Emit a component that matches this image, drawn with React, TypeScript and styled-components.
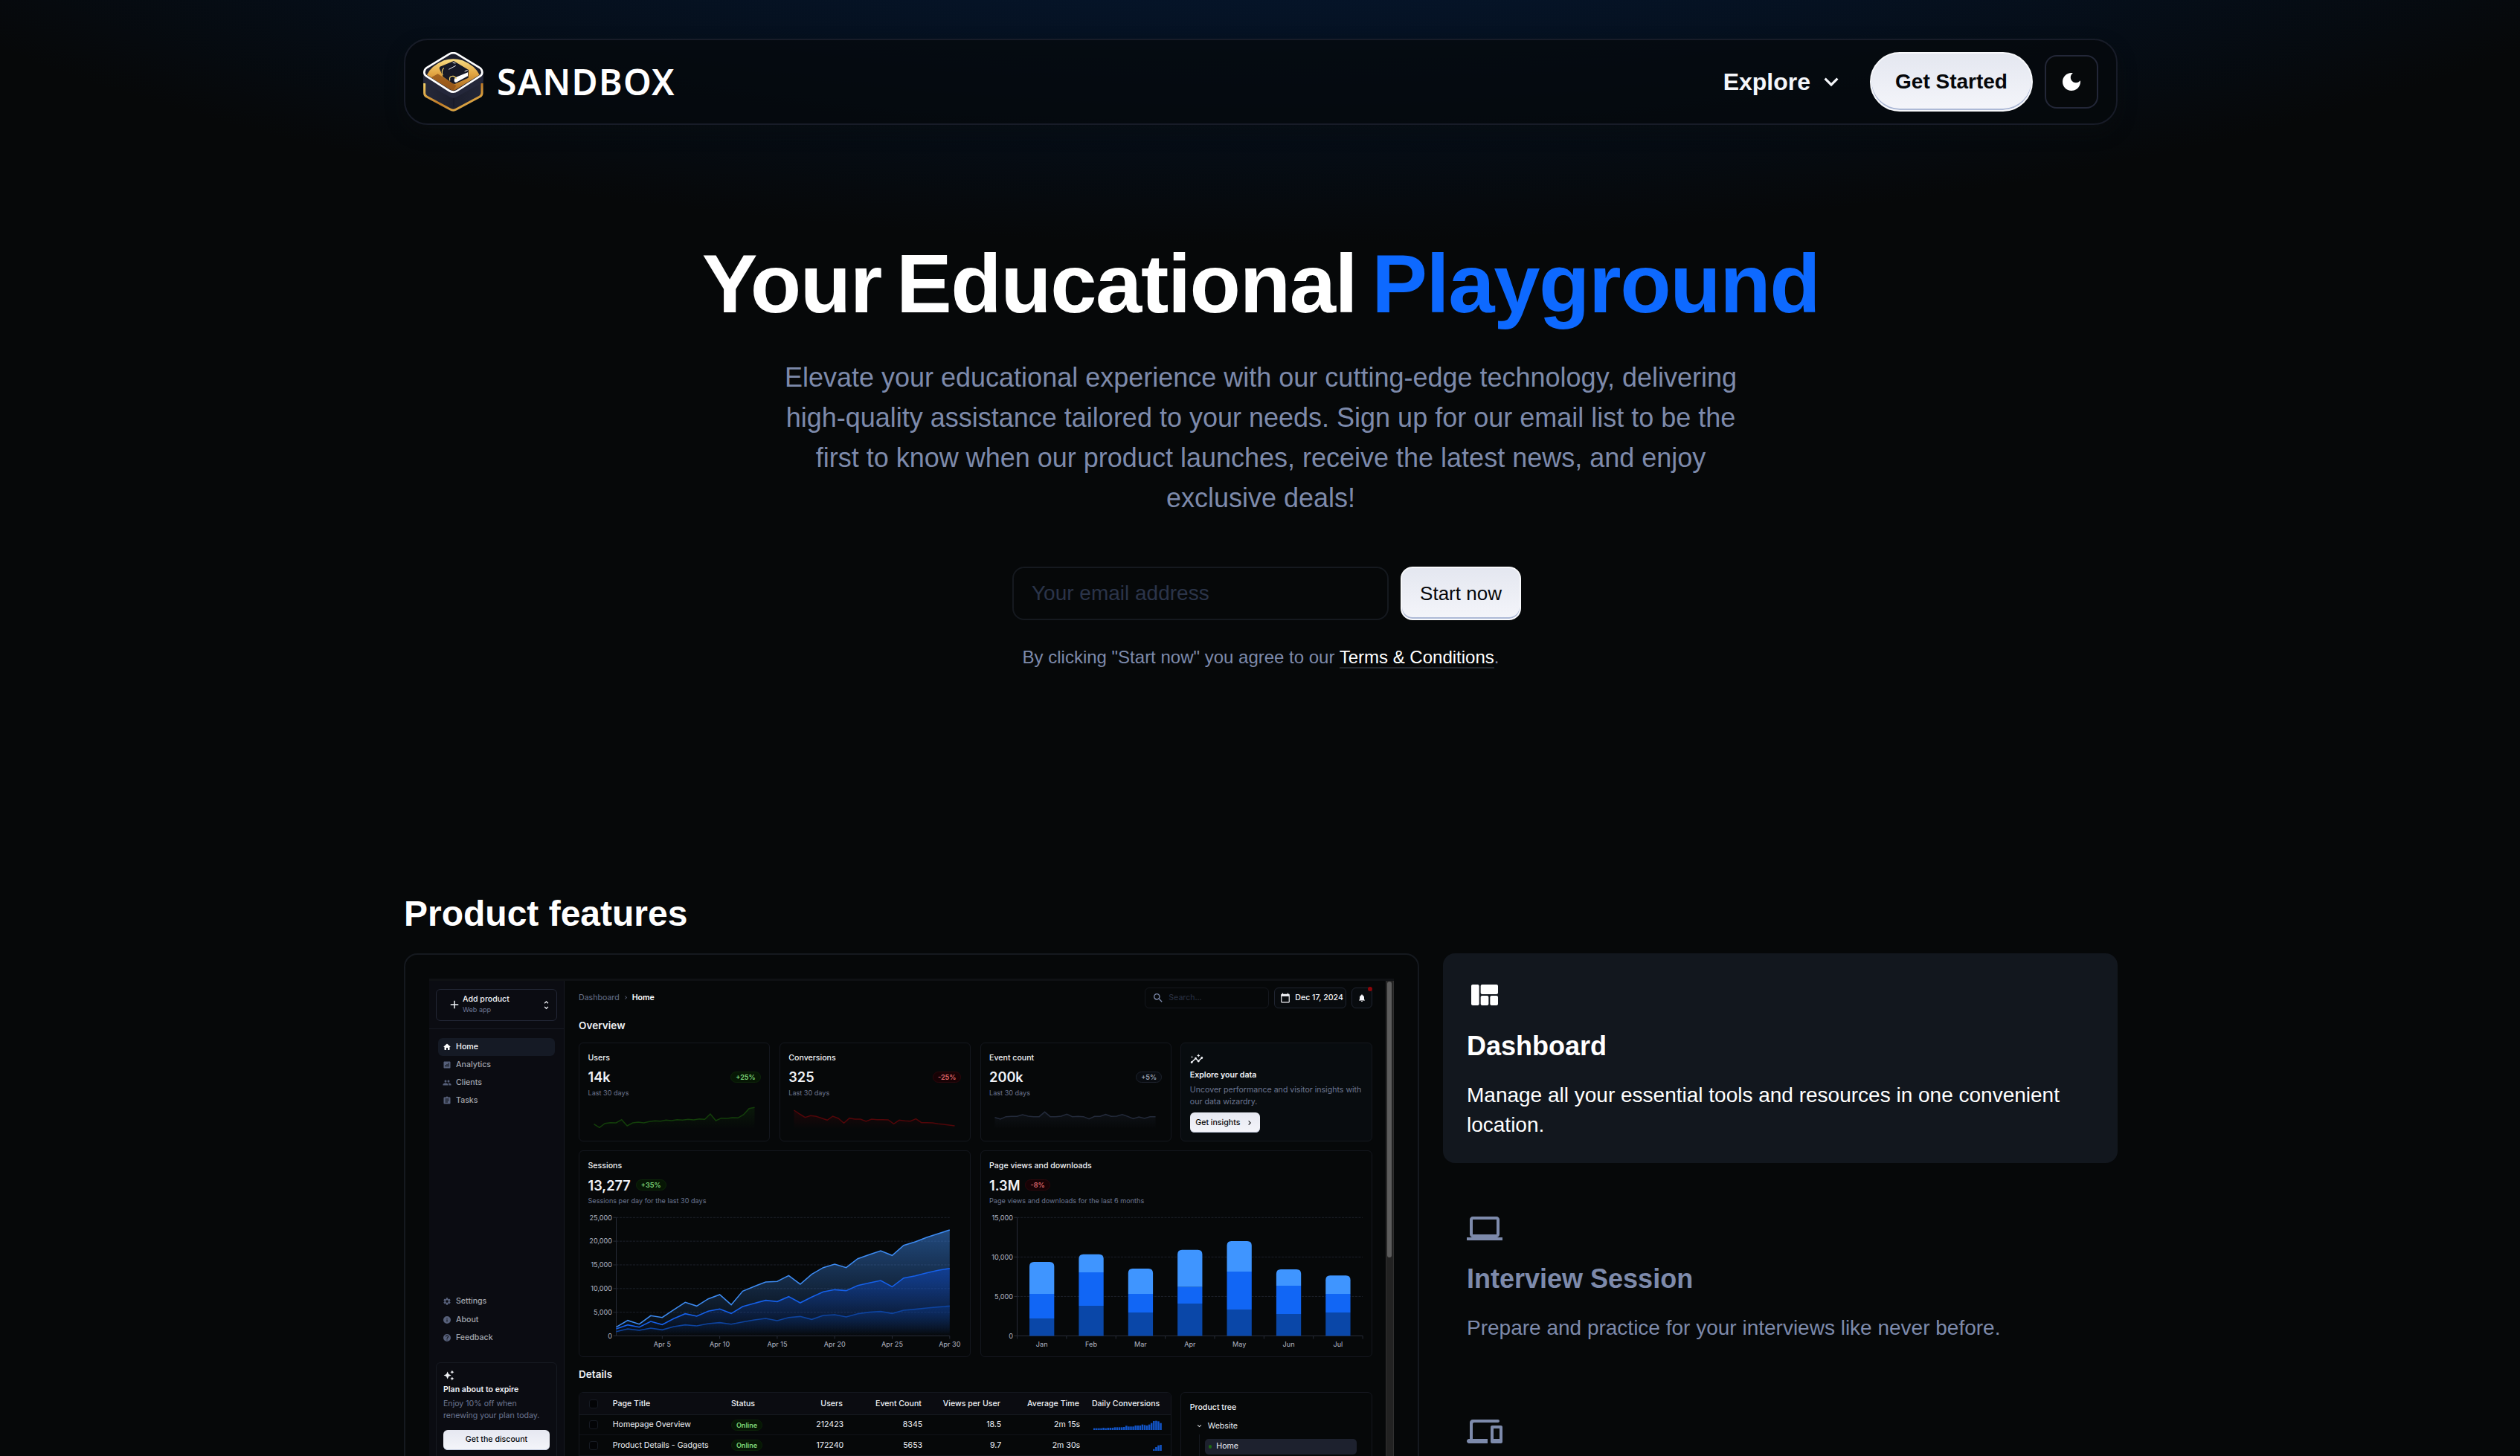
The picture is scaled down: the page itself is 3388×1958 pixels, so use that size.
import React from "react";
import styled, { createGlobalStyle, css } from "styled-components";

const sans = `"Liberation Sans", Arial, Helvetica, sans-serif`;
const inter = `Inter, "Liberation Sans", sans-serif`;
const muted = "#7d8aab";

const GlobalStyle = createGlobalStyle`
  *, *::before, *::after { box-sizing: border-box; }
  body { margin: 0; background: #060809; color: #fff; font-family: ${sans}; }
  h1, h2, h3, p { margin: 0; }
  svg { display: block; flex: none; }
`;

/* ---------- Page ---------- */

const Page = styled.div`
  height: 1958px;
  overflow: hidden;
  padding-left: 2px;
  background: radial-gradient(ellipse 2200px 720px at 50% -392px, #04224d, transparent) no-repeat #060809;
`;
const Container = styled.div`
  width: 2304px;
  margin: 0 auto;
  padding-top: 52px;
`;

/* ---------- Navigation ---------- */

const Nav = styled.header`
  height: 116px;
  display: flex;
  align-items: center;
  padding: 0 24px 0 24px;
  border: 2px solid #181c28;
  border-radius: 32px;
  background: rgba(5, 9, 11, 0.7);
  box-shadow: 0 10px 24px rgba(12, 14, 16, 0.4);
`;
const WordMark = styled.span`
  margin-left: 18px;
  font: 600 48px/60px "Noto Sans", "Open Sans", sans-serif;
  letter-spacing: 1.3px;
  flex: 1;
`;
const ExploreLink = styled.a`
  display: flex;
  align-items: center;
  gap: 9px;
  font-size: 32px;
  font-weight: 700;
  line-height: 40px;
  color: #f5f6fa;
  margin-right: 33px;
`;
const whiteButton = css`
  border: 2px solid #f7f8fb;
  background: linear-gradient(180deg, #e4e7f0, #f4f5fa);
  box-shadow: inset 0 -2px 0 #adb9d6;
  color: #05070a;
  font-family: ${sans};
  display: flex;
  align-items: center;
  justify-content: center;
  padding: 0;
`;
const PillButton = styled.button`
  ${whiteButton}
  width: 219px;
  height: 80px;
  border-radius: 40px;
  font-size: 28px;
  font-weight: 700;
`;
const ModeButton = styled.button`
  width: 72px;
  height: 72px;
  margin-left: 16px;
  padding: 0;
  display: grid;
  place-items: center;
  border: 2px solid #232738;
  border-radius: 16px;
  background: #06090b;
  color: #fff;
`;

/* ---------- Hero ---------- */

const Hero = styled.section`
  display: flex;
  flex-direction: column;
  align-items: center;
  margin-top: 147px;
`;
const Title = styled.h1`
  display: flex;
  font-size: 112px;
  line-height: 134px;
  font-weight: 700;
  letter-spacing: -1.4px;
  white-space: pre;
`;
const Word = styled.span<{ $accent?: boolean; $gap?: number }>`
  color: ${(p) => (p.$accent ? "#0d69ff" : "#fff")};
  margin-right: ${(p) => p.$gap ?? 0}px;
`;
const Lead = styled.p`
  width: 1300px;
  margin-top: 32px;
  text-align: center;
  font-size: 36px;
  line-height: 54px;
  color: ${muted};
`;
const SignUp = styled.form`
  display: flex;
  gap: 16px;
  margin: 65px 0 0 16px;
`;
const Email = styled.input`
  width: 506px;
  height: 72px;
  padding: 0 24px;
  border: 2px solid #15191f;
  border-radius: 16px;
  background: transparent;
  font: 28px ${sans};
  color: #fff;
  &::placeholder { color: #2b3449; opacity: 1; }
`;
const StartButton = styled.button`
  ${whiteButton}
  width: 162px;
  height: 72px;
  border-radius: 16px;
  font-size: 26px;
`;
const Terms = styled.p`
  margin-top: 32px;
  font-size: 24px;
  line-height: 36px;
  color: ${muted};
`;
const TermsLink = styled.a`
  color: #fff;
  border-bottom: 2px solid #23282e;
`;

/* ---------- Features ---------- */

const Heading = styled.h2`
  margin-top: 295px;
  font-size: 48px;
  line-height: 64px;
  font-weight: 700;
`;
const Features = styled.section`
  display: flex;
  gap: 32px;
  margin-top: 21px;
  align-items: flex-start;
`;
const PreviewCard = styled.div`
  width: 1365px;
  height: 900px;
  padding: 32px 32px 0 32px;
  border: 2px solid #15191f;
  border-radius: 18px;
`;
const FeatureList = styled.div`
  flex: 1;
  display: flex;
  flex-direction: column;
  gap: 32px;
`;
const Feature = styled.article<{ $active?: boolean }>`
  padding: 32px 32px 31px;
  border-radius: 16px;
  color: ${(p) => (p.$active ? "#fff" : muted)};
  background: ${(p) => (p.$active ? "#12171e" : "transparent")};
`;
const FeatureTitle = styled.h3`
  margin-top: 16.5px;
  font-size: 36px;
  line-height: 56px;
`;
const FeatureText = styled.p`
  margin-top: 18px;
  font-size: 28px;
  line-height: 40px;
`;

/* ---------- Dashboard preview ---------- */

const Preview = styled.div`
  width: 1297px;
  height: 700px;
  display: flex;
  border-top: 3px solid #0f1114;
  font-family: ${inter};
  font-size: 10.6px;
  line-height: 16px;
  color: #f0f2f6;
`;
const Sidebar = styled.aside`
  width: 182px;
  background: #0b0c12;
  border-right: 1px solid #171a22;
`;
const ProductBox = styled.div`
  padding: 11px 9px 10px;
  border-bottom: 1px solid #171a22;
`;
const ProductSelect = styled.div`
  height: 42.5px;
  display: flex;
  align-items: center;
  padding: 0 6px 0 15px;
  border: 1px solid #232736;
  border-radius: 6px;
`;
const ProductName = styled.div`
  flex: 1;
  margin-left: 2px;
  font-weight: 500;
  line-height: 14px;
`;
const Small = styled.div`
  font-size: 9.1px;
  font-weight: 400;
  line-height: 14px;
  color: #6d7792;
`;
const Menu = styled.nav<{ $top: number }>`
  display: flex;
  flex-direction: column;
  gap: 0.3px;
  margin: ${(p) => p.$top}px 12px 0;
`;
const MenuItem = styled.a<{ $active?: boolean }>`
  height: 24px;
  display: flex;
  align-items: center;
  gap: 6px;
  padding-left: 6px;
  border-radius: 6px;
  font-weight: 500;
  color: ${(p) => (p.$active ? "#f5f6fa" : "#a3a6ae")};
  background: ${(p) => (p.$active ? "#151a25" : "transparent")};
  svg { color: ${(p) => (p.$active ? "#fff" : "#57607a")}; }
`;
const PlanCard = styled.div`
  margin: 21px 9px 0;
  height: 140px;
  padding: 9px;
  border: 1px solid #171a22;
  border-radius: 6px;
`;
const PlanTitle = styled.div`
  margin-top: 4px;
  font-weight: 600;
`;
const PlanText = styled.p`
  margin-top: 3.5px;
  line-height: 15.3px;
  color: #6d7792;
  white-space: nowrap;
`;
const PreviewButton = styled.div<{ $w: number; $top: number }>`
  width: ${(p) => p.$w}px;
  height: 27.5px;
  margin-top: ${(p) => p.$top}px;
  display: flex;
  align-items: center;
  justify-content: center;
  gap: 7px;
  border-radius: 6px;
  background: linear-gradient(#e6e8f1, #f4f5fa);
  box-shadow: inset 0 -1px 0 #c5cde0;
  color: #05070a;
  font-weight: 500;
  white-space: nowrap;
`;

const Main = styled.main`
  flex: 1;
  min-width: 0;
  padding: 9px 18px 0 19px;
`;
const TopBar = styled.div`
  display: flex;
  align-items: center;
  height: 27.5px;
  gap: 7px;
`;
const Crumbs = styled.div`
  flex: 1;
  display: flex;
  align-items: center;
  gap: 4px;
  color: #68728d;
  b { font-weight: 600; color: #fff; }
`;
const TopControl = styled.div<{ $w: number; $dim?: boolean }>`
  position: relative;
  width: ${(p) => p.$w}px;
  height: 27.5px;
  display: flex;
  align-items: center;
  gap: 6px;
  padding: 0 7px;
  white-space: nowrap;
  border: 1px solid ${(p) => (p.$dim ? "#14171d" : "#1f2430")};
  border-radius: 6px;
  font-weight: ${(p) => (p.$dim ? 400 : 500)};
  color: ${(p) => (p.$dim ? "#2b3244" : "#f5f6fa")};
  background: ${(p) => (p.$dim ? "transparent" : "#080b0e")};
`;
const SearchBox = styled(TopControl)`
  padding-left: 9px;
`;
const AlertDot = styled.span`
  position: absolute;
  top: -2px;
  right: -1.5px;
  width: 6px;
  height: 6px;
  border-radius: 50%;
  background: #8c0509;
`;
const SectionTitle = styled.div`
  margin-top: 13px;
  font-size: 13.6px;
  line-height: 20px;
  font-weight: 600;
`;
const CardRow = styled.div<{ $top: number; $h: number; $cols: string }>`
  display: grid;
  grid-template-columns: ${(p) => p.$cols};
  gap: 12.6px;
  margin-top: ${(p) => p.$top}px;
  height: ${(p) => p.$h}px;
`;
const Card = styled.div<{ $tint?: boolean }>`
  padding: 12px 11.5px 0;
  min-width: 0;
  border: 1px solid #14171e;
  border-radius: 6px;
  background: ${(p) => (p.$tint ? "#080c0f" : "transparent")};
`;
const CardLabel = styled.div`
  font-weight: 500;
`;
const ValueRow = styled.div<{ $spread?: boolean }>`
  display: flex;
  align-items: center;
  justify-content: ${(p) => (p.$spread ? "space-between" : "flex-start")};
  gap: 7px;
  margin: 6.3px 0 3.4px;
  font-size: 18.2px;
  line-height: 22px;
  font-weight: 600;
`;
const tones = {
  good: ["#7ed87a", "#061604", "#0c2409"],
  bad: ["#e2686c", "#170205", "#2c070b"],
  flat: ["#9ba4b8", "#090c11", "#1d222d"],
};
type Tone = keyof typeof tones;
const Chip = styled.span<{ $tone: Tone }>`
  height: 15.4px;
  padding: 0 6px;
  border-radius: 8px;
  border: 1px solid ${(p) => tones[p.$tone][2]};
  background: ${(p) => tones[p.$tone][1]};
  color: ${(p) => tones[p.$tone][0]};
  font-size: 9.1px;
  line-height: 13.4px;
  font-weight: 600;
`;
const InsightTitle = styled.div`
  margin-top: 5px;
  font-weight: 600;
`;
const InsightText = styled.p`
  margin-top: 4.3px;
  color: #6d7792;
  white-space: nowrap;
`;
const Scrollbar = styled.div`
  width: 11.5px;
  display: flex;
  justify-content: center;
  padding-top: 1px;
  background: #222;
  border-left: 1px solid #303030;
  border-right: 1px solid #303030;
`;
const Thumb = styled.div`
  width: 6px;
  height: 371px;
  border-radius: 3px;
  background: #5c5c5c;
`;

/* ---------- Table ---------- */

const Table = styled.div`
  border: 1px solid #14171e;
  border-radius: 6px;
  overflow: hidden;
`;
const Row = styled.div<{ $head?: boolean }>`
  display: grid;
  grid-template-columns: 44.7px 159.2px ${(p) => (p.$head ? "70px 80px" : "70px 81.3px")} 106px 106px 106px 1fr;
  align-items: center;
  height: ${(p) => (p.$head ? 30.5 : 27.2)}px;
  border-bottom: 1px solid ${(p) => (p.$head ? "#171a21" : "#101318")};
  background: ${(p) => (p.$head ? "#0b0c11" : "transparent")};
  font-weight: ${(p) => (p.$head ? 500 : 400)};
  white-space: nowrap;
`;
const Num = styled.span`
  text-align: right;
`;
const Daily = styled.span`
  padding-left: 17px;
`;
const StatusCell = styled.span`
  display: flex;
`;
const Check = styled.span`
  width: 12px;
  height: 12px;
  margin-left: 12.5px;
  border-radius: 3px;
  border: 1px solid #161a22;
  background: #030406;
`;

/* ---------- Tree ---------- */

const TreeRow = styled.div`
  display: flex;
  align-items: center;
  gap: 6px;
  margin: 9px 0 0 7px;
`;
const TreeBranch = styled.div`
  margin: 3px 8px 0 12px;
  padding: 6px 0 0 7px;
  height: 60px;
  border-left: 1px solid #14171e;
`;
const TreeLeaf = styled.div`
  height: 21px;
  display: flex;
  align-items: center;
  gap: 6px;
  padding-left: 5px;
  border-radius: 5px;
  background: #1d212e;
`;
const Dot = styled.span`
  width: 4.5px;
  height: 4.5px;
  border-radius: 50%;
  background: #1d6a14;
`;

/* ---------- Icons ---------- */

const Icon = ({ d, size }: { d: string; size: number }) => (
  <svg width={size} height={size} viewBox="0 0 24 24" fill="currentColor">
    <path d={d} fillRule="evenodd" />
  </svg>
);

const icons = {
  moon: "M12 3c-4.97 0-9 4.03-9 9s4.03 9 9 9 9-4.03 9-9c0-.46-.04-.92-.1-1.36-.98 1.37-2.58 2.26-4.4 2.26-2.98 0-5.4-2.42-5.4-5.4 0-1.81.89-3.42 2.26-4.4-.44-.06-.9-.1-1.36-.1z",
  down: "M7.41 8.59 12 13.17l4.59-4.58L18 10l-6 6-6-6z",
  right: "M8.59 16.59 13.17 12 8.59 7.41 10 6l6 6-6 6z",
  quilt:
    "M21 6v4.5c0 .55-.45 1-1 1h-9.67c-.55 0-1-.45-1-1V6c0-.55.45-1 1-1H20c.55 0 1 .45 1 1zm-6.33 12v-4.5c0-.55-.45-1-1-1h-3.33c-.55 0-1 .45-1 1V18c0 .55.45 1 1 1h3.33c.55 0 1-.45 1-1zm1-4.5V18c0 .55.45 1 1 1H20c.55 0 1-.45 1-1v-4.5c0-.55-.45-1-1-1h-3.33c-.56 0-1 .45-1 1zM8.33 18V6c0-.55-.45-1-1-1H4c-.55 0-1 .45-1 1v12c0 .55.45 1 1 1h3.33c.55 0 1-.45 1-1z",
  laptop:
    "M20 18c1.1 0 2-.9 2-2V6c0-1.1-.9-2-2-2H4c-1.1 0-2 .9-2 2v10c0 1.1.9 2 2 2H0v2h24v-2h-4zM4 6h16v10H4V6z",
  devices:
    "M4 7c0-.55.45-1 1-1h16c.55 0 1-.45 1-1s-.45-1-1-1H4c-1.1 0-2 .9-2 2v11h-.5c-.83 0-1.5.67-1.5 1.5S.67 20 1.5 20H14v-3H4V7zm19 1h-6c-.55 0-1 .45-1 1v10c0 .55.45 1 1 1h6c.55 0 1-.45 1-1V9c0-.55-.45-1-1-1zm-1 9h-4v-7h4v7z",
  add: "M19 13h-6v6h-2v-6H5v-2h6V5h2v6h6v2z",
  unfold:
    "M12 5.83 15.17 9l1.41-1.41L12 3 7.41 7.59 8.83 9 12 5.83zm0 12.34L8.83 15l-1.41 1.41L12 21l4.59-4.59L15.17 15 12 18.17z",
  home: "M10 19v-5h4v5c0 .55.45 1 1 1h3c.55 0 1-.45 1-1v-7h1.7c.46 0 .68-.57.33-.87L12.67 3.6a1 1 0 0 0-1.34 0l-8.36 7.53c-.34.3-.13.87.33.87H5v7c0 .55.45 1 1 1h3c.55 0 1-.45 1-1z",
  analytics:
    "M19 3H5c-1.1 0-2 .9-2 2v14c0 1.1.9 2 2 2h14c1.1 0 2-.9 2-2V5c0-1.1-.9-2-2-2zM9 17H7v-5h2v5zm4 0h-2v-7h2v7zm4 0h-2V7h2v10z",
  people:
    "M16 11c1.66 0 2.99-1.34 2.99-3S17.66 5 16 5s-3 1.34-3 3 1.34 3 3 3zm-8 0c1.66 0 2.99-1.34 2.99-3S9.66 5 8 5 5 6.34 5 8s1.34 3 3 3zm0 2c-2.33 0-7 1.17-7 3.500V19h14v-2.500c0-2.330-4.670-3.500-7-3.500zm8 0c-.29 0-.62.02-.97.05 1.160.84 1.970 1.970 1.970 3.450V19h6v-2.500c0-2.330-4.670-3.500-7-3.500z",
  tasks:
    "M19 3h-4.180C14.400 1.840 13.300 1 12 1s-2.400.84-2.820 2H5c-1.100 0-2 .9-2 2v14c0 1.100.9 2 2 2h14c1.100 0 2-.9 2-2V5c0-1.100-.9-2-2-2zM14 17H7v-2h7v2zm3-4H7v-2h10v2zm0-4H7V7h10v2z",
  settings:
    "M19.140 12.940c.04-.3.060-.61.060-.94 0-.32-.02-.64-.07-.94l2.030-1.580a.49.49 0 0 0 .12-.61l-1.920-3.320a.49.49 0 0 0-.59-.22l-2.390.96c-.5-.38-1.030-.7-1.620-.94l-.36-2.540a.48.48 0 0 0-.48-.41h-3.840c-.24 0-.43.17-.47.41l-.36 2.540c-.59.24-1.130.57-1.620.94l-2.390-.96a.48.48 0 0 0-.59.22L2.740 8.870c-.12.21-.08.47.12.61l2.030 1.580c-.05.3-.09.63-.09.94s.02.64.07.94l-2.030 1.580a.49.49 0 0 0-.12.61l1.920 3.320c.12.22.37.29.59.22l2.390-.96c.5.38 1.030.7 1.620.94l.36 2.540c.05.24.24.41.48.41h3.840c.24 0 .44-.17.47-.41l.36-2.540c.59-.24 1.130-.56 1.620-.94l2.390.96c.22.08.47 0 .59-.22l1.920-3.320a.48.48 0 0 0-.12-.61l-2.010-1.580zM12 15.600c-1.980 0-3.600-1.620-3.600-3.600s1.620-3.600 3.600-3.600 3.600 1.620 3.600 3.600-1.620 3.600-3.600 3.600z",
  info: "M12 2a10 10 0 1 0 0 20 10 10 0 0 0 0-20zm1 15h-2v-6h2v6zm0-8h-2V7h2v2z",
  help: "M12 2a10 10 0 1 0 0 20 10 10 0 0 0 0-20zm1 17h-2v-2h2v2zm2.070-7.750-.9.920C13.450 12.900 13 13.500 13 15h-2v-.5c0-1.100.45-2.100 1.170-2.830l1.240-1.260c.37-.36.59-.86.59-1.410 0-1.100-.9-2-2-2s-2 .9-2 2H8c0-2.210 1.790-4 4-4s4 1.790 4 4c0 .88-.36 1.680-.93 2.250z",
  sparkle:
    "M19 9l1.250-2.750L23 5l-2.750-1.250L19 1l-1.250 2.750L15 5l2.750 1.250L19 9zm-7.500.5L9 4 6.500 9.500 1 12l5.500 2.500L9 20l2.500-5.500L17 12l-5.500-2.500zM19 15l-1.250 2.750L15 19l2.750 1.250L19 23l1.250-2.750L23 19l-2.750-1.250L19 15z",
  search:
    "M15.500 14h-.79l-.28-.27A6.470 6.470 0 0 0 16 9.500 6.500 6.500 0 1 0 9.500 16c1.610 0 3.090-.59 4.230-1.570l.27.28v.79l5 4.990L20.490 19l-4.990-5zm-6 0C7.010 14 5 11.990 5 9.500S7.010 5 9.500 5 14 7.010 14 9.500 11.990 14 9.500 14z",
  calendar:
    "M20 3h-1V1h-2v2H7V1H5v2H4c-1.100 0-2 .9-2 2v16c0 1.100.9 2 2 2h16c1.100 0 2-.9 2-2V5c0-1.100-.9-2-2-2zm0 18H4V8h16v13z",
  bell: "M12 22c1.100 0 2-.9 2-2h-4c0 1.100.9 2 2 2zm6-6v-5c0-3.070-1.630-5.640-4.500-6.320V4c0-.83-.67-1.500-1.500-1.500s-1.500.67-1.500 1.500v.68C7.640 5.360 6 7.920 6 11v5l-2 2v1h16v-1l-2-2z",
  insights:
    "M21 8c-1.450 0-2.260 1.440-1.930 2.510l-3.550 3.560c-.3-.09-.74-.09-1.040 0l-2.550-2.550C12.270 10.450 11.460 9 10 9c-1.450 0-2.270 1.440-1.930 2.520l-4.560 4.550C2.440 15.740 1 16.550 1 18c0 1.100.9 2 2 2 1.450 0 2.260-1.440 1.930-2.510l4.550-4.560c.3.09.74.09 1.040 0l2.550 2.550C12.730 16.550 13.540 18 15 18c1.450 0 2.270-1.440 1.930-2.520l3.560-3.550C21.560 12.260 23 11.450 23 10c0-1.100-.9-2-2-2zM15 9l.94-2.070L18 6l-2.060-.93L15 3l-.92 2.070L12 6l2.080.93zM3.500 11 4 9l2-.5L4 8l-.5-2L3 8l-2 .5L3 9z",
};

const Logo = () => (
  <svg width="81" height="80" viewBox="117 90 243 240">
    <defs>
      <linearGradient id="gold" x1="0" y1="0" x2="1" y2="1">
        <stop offset="0" stopColor="#f3cd64" />
        <stop offset="0.5" stopColor="#c07a24" />
        <stop offset="1" stopColor="#f3c85a" />
      </linearGradient>
      <linearGradient id="sand" x1="0" y1="0" x2="0" y2="1">
        <stop offset="0" stopColor="#f8dc83" />
        <stop offset="0.45" stopColor="#e3a845" />
        <stop offset="1" stopColor="#a8651d" />
      </linearGradient>
      <linearGradient id="box" x1="0" y1="0" x2="1" y2="0">
        <stop offset="0" stopColor="#262939" />
        <stop offset="0.5" stopColor="#1c1f2e" />
        <stop offset="1" stopColor="#232638" />
      </linearGradient>
    </defs>
    <path d="M117 172V256Q117 268 128 274L224 326Q238 333 252 326L348 274Q359 268 359 256V172Z" fill="url(#box)" />
    <path d="M122 216V255Q122 265 131 270L226 321Q238 328 250 321L345 270Q354 265 354 255V216" fill="none" stroke="url(#gold)" strokeWidth="9" />
    <path d="M117 172V204Q119 214 130 220L226 272Q238 278 250 272L346 220Q357 214 359 204V172Z" fill="#24273a" />
    <path d="M240 277V312" stroke="#151724" strokeWidth="3" />
    <path d="M222 98Q238 89 254 98L345 153Q355 160 355 172 355 182 345 188L254 246Q238 256 222 246L131 188Q121 182 121 172 121 160 131 153Z" fill="#1b1d2b" />
    <path d="M132 182Q150 145 200 124 238 112 276 124 326 145 344 182L250 241Q238 248 226 241Z" fill="url(#sand)" />
    <path d="M150 192L176 178 250 226 238 245 226 241Z" fill="#8f4f16" opacity="0.75" />
    <path d="M222 98Q238 89 254 98L345 153Q355 160 355 172 355 182 345 188L254 246Q238 256 222 246L131 188Q121 182 121 172 121 160 131 153Z" fill="none" stroke="#fff" strokeWidth="8" />
    <path d="M183 158Q180 150 190 147L240 126 300 162 299 194 244 219 236 217 197 190Z" fill="#161826" />
    <path d="M242 202Q242 194 250 191L297 172V187L250 212Q241 214 242 202Z" fill="#fff" />
    <path d="M224 205Q220 186 238 187Q248 190 250 198" fill="none" stroke="#f2cf69" strokeWidth="4" />
    <path d="M196 184Q188 168 200 154" fill="none" stroke="#f2cf69" strokeWidth="3.5" />
    <path d="M220 160L248 145" stroke="#e9e9ee" strokeWidth="3" />
    <path d="M236 133L247 135M284 168L296 163" stroke="#fff" strokeWidth="3" />
  </svg>
);

/* ---------- Charts ---------- */

const users = [398, 412, 395, 392, 393, 380, 405, 393, 390, 393, 388, 385, 386, 382, 384, 380, 382, 379, 381, 377, 379, 357, 384, 374, 375, 372, 373, 360, 335, 331].map((v) => v / 3 - 98);
const conversions = [342, 357, 371, 364, 367, 374, 382, 366, 375, 394, 374, 378, 378, 387, 378, 380, 380, 381, 397, 382, 385, 386, 377, 392, 392, 393, 397, 399, 402, 405].map((v) => v / 3 - 98);
const events = [701, 708, 698, 697, 697, 690, 696, 698, 698, 679, 698, 698, 696, 688, 698, 697, 698, 707, 697, 697, 689, 697, 696, 689, 697, 706, 699, 705, 698, 698].map((v) => v / 3 - 208);

const Spark = ({ id, points, color }: { id: string; points: number[]; color: string }) => {
  const line = points.map((y, i) => `${(7.5 + i * 7.45).toFixed(2)},${y.toFixed(2)}`).join(" ");
  return (
    <svg width="232" height="42">
      <defs>
        <linearGradient id={id} x1="0" y1="0" x2="0" y2="1">
          <stop offset="0" stopColor={color} stopOpacity="0.3" />
          <stop offset="1" stopColor={color} stopOpacity="0" />
        </linearGradient>
      </defs>
      <polygon points={`7.5,41 ${line} 223.5,41`} fill={`url(#${id})`} />
      <polyline points={line} fill="none" stroke={color} strokeWidth="1.5" />
    </svg>
  );
};

const sessions = [
  { id: "s3", line: "#3d8bf2", fill: "#3d8bf2", fade: 0.5, y: [740, 713, 728, 694, 701, 670, 640, 655, 626, 609, 650, 595, 576, 558, 556, 532, 567, 527, 500, 486, 500, 464, 448, 432, 451, 410, 396, 378, 363, 348] },
  { id: "s2", line: "#1560ea", fill: "#0b4ad0", fade: 0.5, y: [747, 731, 740, 717, 730, 706, 686, 696, 676, 667, 685, 657, 644, 632, 637, 617, 642, 619, 598, 589, 593, 572, 562, 552, 577, 542, 533, 521, 511, 503] },
  { id: "s1", line: "#0d439f", fill: "#0b3f98", fade: 0.4, y: [758, 747, 753, 744, 751, 738, 731, 735, 726, 722, 728, 719, 711, 705, 714, 701, 697, 709, 693, 690, 699, 686, 680, 677, 685, 672, 668, 663, 659, 655] },
];

const Tick = styled.text`
  font: 400 9.1px ${inter};
  fill: #b3b8c6;
`;
const BASE = 174.5;
const TOP = 15.3;

const Grid = ({ x1, x2, labels }: { x1: number; x2: number; labels: string[] }) => (
  <>
    {labels.map((l, i) => {
      const y = BASE - ((BASE - TOP) * i) / (labels.length - 1);
      return (
        <g key={l}>
          {i > 0 && <line x1={x1} x2={x2} y1={y} y2={y} stroke="#1d212b" strokeDasharray="3 1.5" />}
          <line x1={x1 - 4} x2={x1} y1={y} y2={y} stroke="#262b37" />
          <Tick x={x1 - 5.5} y={y + 3.3} textAnchor="end">{l}</Tick>
        </g>
      );
    })}
    <path d={`M${x1} ${TOP}V${BASE}H${x2}`} fill="none" stroke="#262b37" />
  </>
);

const SessionsChart = () => {
  const x0 = 37.5;
  const w = 448.3;
  return (
    <svg width="502" height="196" overflow="visible">
      <defs>
        {sessions.map((s) => (
          <linearGradient key={s.id} id={s.id} x1="0" y1="0" x2="0" y2="1">
            <stop offset="0" stopColor={s.fill} stopOpacity={s.fade} />
            <stop offset="1" stopColor={s.fill} stopOpacity="0" />
          </linearGradient>
        ))}
      </defs>
      <Grid x1={x0} x2={x0 + w} labels={["0", "5,000", "10,000", "15,000", "20,000", "25,000"]} />
      {sessions.map((s) => {
        const pts = s.y.map((v, i) => `${(x0 + (w * i) / 29).toFixed(2)},${(v / 3 - 84).toFixed(2)}`).join(" ");
        return (
          <g key={s.id}>
            <polygon points={`${x0},${BASE} ${pts} ${x0 + w},${BASE}`} fill={`url(#${s.id})`} />
            <polyline points={pts} fill="none" stroke={s.line} strokeWidth="1.6" />
          </g>
        );
      })}
      {[5, 10, 15, 20, 25, 30].map((d) => {
        const x = x0 + (w * (d - 1)) / 29;
        return (
          <g key={d}>
            <line x1={x} x2={x} y1={BASE} y2={BASE + 4} stroke="#262b37" />
            <Tick x={x} y={188.8} textAnchor="middle">{`Apr ${d}`}</Tick>
          </g>
        );
      })}
    </svg>
  );
};

const months: [string, number, number, number][] = [
  ["Jan", 477, 606, 705],
  ["Feb", 446, 519, 654],
  ["Mar", 504, 606, 681],
  ["Apr", 428, 578, 645],
  ["May", 393, 516, 669],
  ["Jun", 507, 573, 687],
  ["Jul", 532, 606, 681],
];

const ViewsChart = () => {
  const x0 = 37.5;
  const w = 464.6;
  const step = w / 7;
  const bar = 33.3;
  return (
    <svg width="502" height="196" overflow="visible">
      <Grid x1={x0} x2={x0 + w} labels={["0", "5,000", "10,000", "15,000"]} />
      {months.map(([m, a, b, c], i) => {
        const x = x0 + step * i + (step - bar) / 2;
        const [ya, yb, yc] = [a, b, c].map((v) => v / 3 - 84);
        return (
          <g key={m}>
            <path d={`M${x} ${yb}V${ya + 6}q0 -6 6 -6h${bar - 12}q6 0 6 6V${yb}z`} fill="#3f95ff" />
            <rect x={x} y={yb} width={bar} height={yc - yb} fill="#1166f5" />
            <rect x={x} y={yc} width={bar} height={BASE - yc} fill="#0a47a8" />
            <line x1={x0 + step * i} x2={x0 + step * i} y1={BASE} y2={BASE + 4} stroke="#262b37" />
            <Tick x={x + bar / 2} y={188.8} textAnchor="middle">{m}</Tick>
          </g>
        );
      })}
      <line x1={x0 + w} x2={x0 + w} y1={BASE} y2={BASE + 4} stroke="#262b37" />
    </svg>
  );
};

const dailyHome = [7, 7, 7, 7, 9, 7, 9, 9, 9, 11, 11, 11, 11, 12, 17, 14, 14, 14, 18, 18, 18, 22, 20, 18, 22, 28, 36, 37, 35, 28];
const dailyGadgets = [...Array(26).fill(0), 7, 15, 22, 24];

const DailyBars = ({ data }: { data: number[] }) => (
  <svg width="93" height="14">
    {data.map((h, i) => (
      <rect key={i} x={i * 3.08} y={14 - h / 3} width="2.5" height={h / 3} fill="#1254c6" />
    ))}
  </svg>
);
const DailyCell = styled.span`
  padding: 0 0 0 17.5px;
`;

/* ---------- Sections ---------- */

const Metric = ({ label, value, chip, tone, children }: { label: string; value: string; chip: string; tone: Tone; children: React.ReactNode }) => (
  <Card>
    <CardLabel>{label}</CardLabel>
    <ValueRow $spread>
      {value}
      <Chip $tone={tone}>{chip}</Chip>
    </ValueRow>
    <Small>Last 30 days</Small>
    {children}
  </Card>
);

const ChartCard = ({ label, value, chip, tone, note, children }: { label: string; value: string; chip: string; tone: Tone; note: string; children: React.ReactNode }) => (
  <Card>
    <CardLabel>{label}</CardLabel>
    <ValueRow>
      {value}
      <Chip $tone={tone}>{chip}</Chip>
    </ValueRow>
    <Small>{note}</Small>
    {children}
  </Card>
);

const rows = [
  { title: "Homepage Overview", users: "212423", events: "8345", views: "18.5", time: "2m 15s", daily: dailyHome },
  { title: "Product Details - Gadgets", users: "172240", events: "5653", views: "9.7", time: "2m 30s", daily: dailyGadgets },
];

const DashboardPreview = () => (
  <Preview>
    <Sidebar>
      <ProductBox>
        <ProductSelect>
          <Icon d={icons.add} size={18} />
          <ProductName>
            Add product
            <Small>Web app</Small>
          </ProductName>
          <Icon d={icons.unfold} size={15} />
        </ProductSelect>
      </ProductBox>
      <Menu $top={12}>
        <MenuItem $active><Icon d={icons.home} size={12} />Home</MenuItem>
        <MenuItem><Icon d={icons.analytics} size={12} />Analytics</MenuItem>
        <MenuItem><Icon d={icons.people} size={12} />Clients</MenuItem>
        <MenuItem><Icon d={icons.tasks} size={12} />Tasks</MenuItem>
      </Menu>
      <Menu $top={246}>
        <MenuItem><Icon d={icons.settings} size={12} />Settings</MenuItem>
        <MenuItem><Icon d={icons.info} size={12} />About</MenuItem>
        <MenuItem><Icon d={icons.help} size={12} />Feedback</MenuItem>
      </Menu>
      <PlanCard>
        <Icon d={icons.sparkle} size={15} />
        <PlanTitle>Plan about to expire</PlanTitle>
        <PlanText>Enjoy 10% off when<br />renewing your plan today.</PlanText>
        <PreviewButton $w={143} $top={11.5}>Get the discount</PreviewButton>
      </PlanCard>
    </Sidebar>
    <Main>
      <TopBar>
        <Crumbs>
          Dashboard <Icon d={icons.right} size={9} /> <b>Home</b>
        </Crumbs>
        <SearchBox $w={167} $dim>
          <svg width="16" height="16" viewBox="0 0 24 24" fill="#7d8aab"><path d={icons.search} /></svg>
          Search...
        </SearchBox>
        <TopControl $w={97}>
          <Icon d={icons.calendar} size={14} />
          Dec 17, 2024
        </TopControl>
        <TopControl $w={27.2}>
          <Icon d={icons.bell} size={12} />
          <AlertDot />
        </TopControl>
      </TopBar>
      <SectionTitle>Overview</SectionTitle>
      <CardRow $top={13.5} $h={132.7} $cols="repeat(4, minmax(0, 1fr))">
        <Metric label="Users" value="14k" chip="+25%" tone="good"><Spark id="u" points={users} color="#133f0a" /></Metric>
        <Metric label="Conversions" value="325" chip="-25%" tone="bad"><Spark id="c" points={conversions} color="#520609" /></Metric>
        <Metric label="Event count" value="200k" chip="+5%" tone="flat"><Spark id="e" points={events} color="#232a3a" /></Metric>
        <Card $tint>
          <Icon d={icons.insights} size={18} />
          <InsightTitle>Explore your data</InsightTitle>
          <InsightText>Uncover performance and visitor insights with<br />our data wizardry.</InsightText>
          <PreviewButton $w={94} $top={5.5}>Get insights <Icon d={icons.right} size={12} /></PreviewButton>
        </Card>
      </CardRow>
      <CardRow $top={12.6} $h={278.2} $cols="repeat(2, minmax(0, 1fr))">
        <ChartCard label="Sessions" value="13,277" chip="+35%" tone="good" note="Sessions per day for the last 30 days"><SessionsChart /></ChartCard>
        <ChartCard label="Page views and downloads" value="1.3M" chip="-8%" tone="bad" note="Page views and downloads for the last 6 months"><ViewsChart /></ChartCard>
      </CardRow>
      <SectionTitle>Details</SectionTitle>
      <CardRow $top={13.3} $h={110} $cols="796.7px minmax(0, 1fr)">
        <Table>
          <Row $head>
            <Check />
            <span>Page Title</span>
            <span>Status</span>
            <Num>Users</Num>
            <Num>Event Count</Num>
            <Num>Views per User</Num>
            <Num>Average Time</Num>
            <Daily>Daily Conversions</Daily>
          </Row>
          {rows.map((r) => (
            <Row key={r.title}>
              <Check />
              <span>{r.title}</span>
              <StatusCell><Chip $tone="good">Online</Chip></StatusCell>
              <Num>{r.users}</Num>
              <Num>{r.events}</Num>
              <Num>{r.views}</Num>
              <Num>{r.time}</Num>
              <DailyCell><DailyBars data={r.daily} /></DailyCell>
            </Row>
          ))}
        </Table>
        <Card>
          <CardLabel>Product tree</CardLabel>
          <TreeRow><Icon d={icons.down} size={11} />Website</TreeRow>
          <TreeBranch><TreeLeaf><Dot />Home</TreeLeaf></TreeBranch>
        </Card>
      </CardRow>
    </Main>
    <Scrollbar><Thumb /></Scrollbar>
  </Preview>
);

export default function App() {
  return (
    <>
      <GlobalStyle />
      <Page>
        <Container>
          <Nav>
            <Logo />
            <WordMark>SANDBOX</WordMark>
            <ExploreLink>Explore <Icon d={icons.down} size={38} /></ExploreLink>
            <PillButton>Get Started</PillButton>
            <ModeButton><Icon d={icons.moon} size={32} /></ModeButton>
          </Nav>
          <Hero>
            <Title>
              <Word $gap={20}>Your</Word>
              <Word $gap={20}>Educational</Word>
              <Word $accent>Playground</Word>
            </Title>
            <Lead>
              Elevate your educational experience with our cutting-edge technology, delivering high-quality assistance
              tailored to your needs. Sign up for our email list to be the first to know when our product launches,
              receive the latest news, and enjoy exclusive deals!
            </Lead>
            <SignUp>
              <Email placeholder="Your email address" />
              <StartButton type="button">Start now</StartButton>
            </SignUp>
            <Terms>
              By clicking "Start now" you agree to our <TermsLink>Terms &amp; Conditions</TermsLink>.
            </Terms>
          </Hero>
          <Heading>Product features</Heading>
          <Features>
            <PreviewCard><DashboardPreview /></PreviewCard>
            <FeatureList>
              <Feature $active>
                <Icon d={icons.quilt} size={48} />
                <FeatureTitle>Dashboard</FeatureTitle>
                <FeatureText>Manage all your essential tools and resources in one convenient location.</FeatureText>
              </Feature>
              <Feature>
                <Icon d={icons.laptop} size={48} />
                <FeatureTitle>Interview Session</FeatureTitle>
                <FeatureText>Prepare and practice for your interviews like never before.</FeatureText>
              </Feature>
              <Feature>
                <Icon d={icons.devices} size={48} />
              </Feature>
            </FeatureList>
          </Features>
        </Container>
      </Page>
    </>
  );
}
